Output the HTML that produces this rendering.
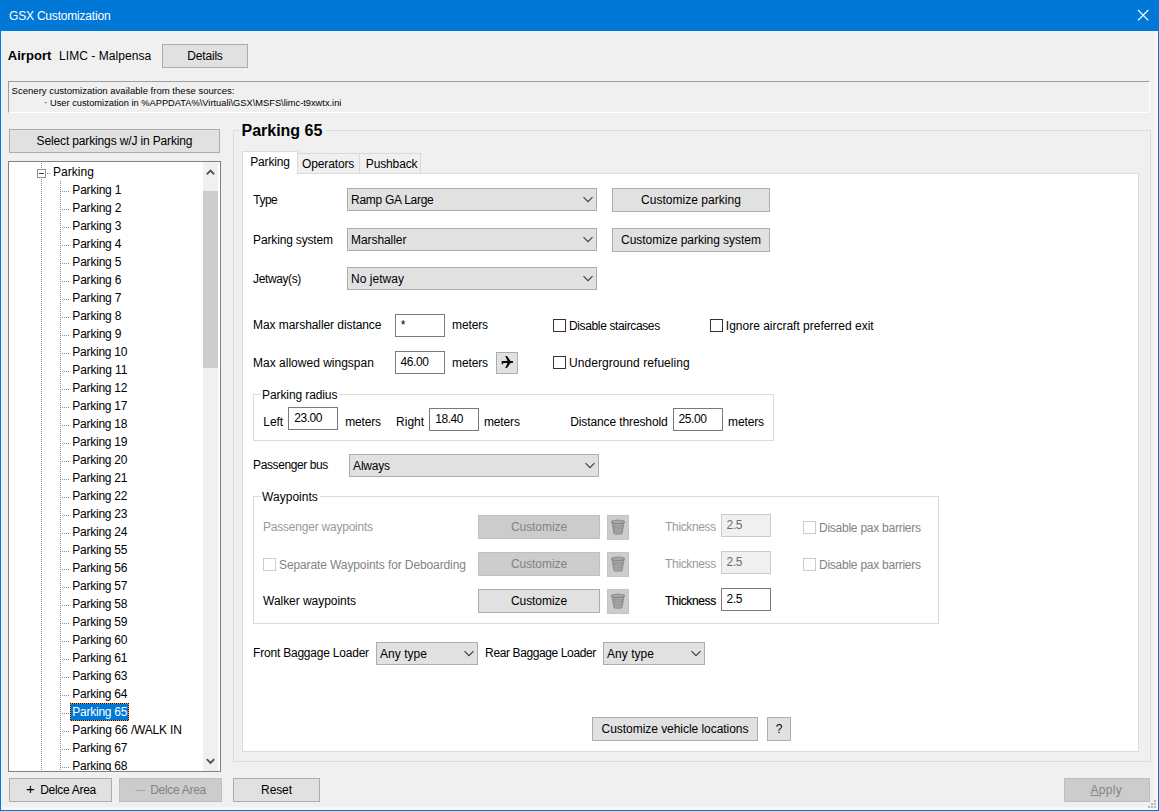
<!DOCTYPE html><html lang="en"><head><meta charset="utf-8"><title>GSX Customization</title><style>

html,body{margin:0;padding:0;}
body{width:1159px;height:811px;overflow:hidden;position:relative;background:#f0f0f0;font-family:"Liberation Sans", sans-serif;font-size:12px;}
.a{position:absolute;box-sizing:border-box;}
.t{position:absolute;white-space:pre;line-height:16px;height:16px;}
.dv{width:1px;background-image:linear-gradient(#8c8c8c 50%,transparent 50%);background-size:1px 2px;}
.dh{height:1px;background-image:linear-gradient(90deg,#8c8c8c 50%,transparent 50%);background-size:2px 1px;}
u{text-decoration:underline;}

</style></head><body>
<div class="a" style="left:0px;top:0px;width:1159px;height:811px;background:#0078d7;"></div>
<div class="a" style="left:1px;top:31px;width:1157px;height:779px;background:#f0f0f0;"></div>
<div class="a" style="left:1155px;top:31px;width:3px;height:779px;background:#f6f7f8;"></div>
<div class="a" style="left:1px;top:807px;width:1157px;height:3px;background:#f4f7fa;"></div>
<span class="t" style="left:9.0px;top:8px;color:#fff;letter-spacing:-0.195px;">GSX Customization</span>
<svg class="a" style="left:1136px;top:8px" width="14" height="14" viewBox="0 0 14 14"><path d="M2 2 L12.3 12.3 M12.3 2 L2 12.3" stroke="#fff" stroke-width="1.15" fill="none"/></svg>
<span class="t" style="left:7.7px;top:48px;color:#000;font-size:13px;font-weight:bold;letter-spacing:0.065px;">Airport</span>
<span class="t" style="left:59.0px;top:48px;color:#000;letter-spacing:0.062px;">LIMC - Malpensa</span>
<div class="a" style="left:162px;top:44px;width:86px;height:24px;background:#e1e1e1;border:1px solid #adadad;"></div>
<span class="t" style="left:162px;top:48px;color:#000;width:86px;text-align:center;letter-spacing:-0.184px;">Details</span>
<div class="a" style="left:8px;top:81px;width:1142px;height:32px;border-top:1px solid #a0a0a0;border-left:1px solid #a0a0a0;border-right:1px solid #fff;border-bottom:1px solid #fff;box-sizing:border-box;"></div>
<span class="t" style="left:11.6px;top:83px;color:#000;font-size:9.56px;">Scenery customization available from these sources:</span>
<span class="t" style="left:44.1px;top:95px;color:#000;font-size:10px;">·</span>
<span class="t" style="left:50.0px;top:95px;color:#000;font-size:9.29px;">User customization in %APPDATA%\Virtuali\GSX\MSFS\limc-t9xwtx.ini</span>
<div class="a" style="left:9px;top:129px;width:211px;height:24px;background:#e1e1e1;border:1px solid #adadad;"></div>
<span class="t" style="left:9px;top:133px;color:#000;width:211px;text-align:center;letter-spacing:-0.143px;">Select parkings w/J in Parking</span>
<div class="a" style="left:8px;top:161px;width:213px;height:611px;background:#fff;border:1px solid #828282;box-sizing:border-box;"></div>
<div class="a" style="left:9px;top:162px;width:194px;height:609px;overflow:hidden">
<div class="a dv" style="left:32px;top:1px;height:608px"></div>
<div class="a dv" style="left:51px;top:19px;height:590px"></div>
<div class="a" style="left:28px;top:7px;width:9px;height:9px;box-sizing:border-box;border:1px solid #919191;background:#fff"></div>
<div class="a" style="left:30px;top:11px;width:5px;height:1px;background:#404040"></div>
<div class="a dh" style="left:38px;top:11px;width:4px"></div>
<span class="t" style="left:44.1px;top:2px;color:#000;letter-spacing:0.016px;">Parking</span>
<div class="a dh" style="left:53px;top:29px;width:7px"></div>
<span class="t" style="left:63.35px;top:20px;color:#000;letter-spacing:-0.211px;">Parking 1</span>
<div class="a dh" style="left:53px;top:47px;width:7px"></div>
<span class="t" style="left:63.35px;top:38px;color:#000;letter-spacing:-0.211px;">Parking 2</span>
<div class="a dh" style="left:53px;top:65px;width:7px"></div>
<span class="t" style="left:63.35px;top:56px;color:#000;letter-spacing:-0.211px;">Parking 3</span>
<div class="a dh" style="left:53px;top:83px;width:7px"></div>
<span class="t" style="left:63.35px;top:74px;color:#000;letter-spacing:-0.211px;">Parking 4</span>
<div class="a dh" style="left:53px;top:101px;width:7px"></div>
<span class="t" style="left:63.35px;top:92px;color:#000;letter-spacing:-0.211px;">Parking 5</span>
<div class="a dh" style="left:53px;top:119px;width:7px"></div>
<span class="t" style="left:63.35px;top:110px;color:#000;letter-spacing:-0.211px;">Parking 6</span>
<div class="a dh" style="left:53px;top:137px;width:7px"></div>
<span class="t" style="left:63.35px;top:128px;color:#000;letter-spacing:-0.211px;">Parking 7</span>
<div class="a dh" style="left:53px;top:155px;width:7px"></div>
<span class="t" style="left:63.35px;top:146px;color:#000;letter-spacing:-0.211px;">Parking 8</span>
<div class="a dh" style="left:53px;top:173px;width:7px"></div>
<span class="t" style="left:63.35px;top:164px;color:#000;letter-spacing:-0.211px;">Parking 9</span>
<div class="a dh" style="left:53px;top:191px;width:7px"></div>
<span class="t" style="left:63.35px;top:182px;color:#000;letter-spacing:-0.258px;">Parking 10</span>
<div class="a dh" style="left:53px;top:209px;width:7px"></div>
<span class="t" style="left:63.35px;top:200px;color:#000;letter-spacing:-0.168px;">Parking 11</span>
<div class="a dh" style="left:53px;top:227px;width:7px"></div>
<span class="t" style="left:63.35px;top:218px;color:#000;letter-spacing:-0.258px;">Parking 12</span>
<div class="a dh" style="left:53px;top:245px;width:7px"></div>
<span class="t" style="left:63.35px;top:236px;color:#000;letter-spacing:-0.258px;">Parking 17</span>
<div class="a dh" style="left:53px;top:263px;width:7px"></div>
<span class="t" style="left:63.35px;top:254px;color:#000;letter-spacing:-0.258px;">Parking 18</span>
<div class="a dh" style="left:53px;top:281px;width:7px"></div>
<span class="t" style="left:63.35px;top:272px;color:#000;letter-spacing:-0.258px;">Parking 19</span>
<div class="a dh" style="left:53px;top:299px;width:7px"></div>
<span class="t" style="left:63.35px;top:290px;color:#000;letter-spacing:-0.258px;">Parking 20</span>
<div class="a dh" style="left:53px;top:317px;width:7px"></div>
<span class="t" style="left:63.35px;top:308px;color:#000;letter-spacing:-0.258px;">Parking 21</span>
<div class="a dh" style="left:53px;top:335px;width:7px"></div>
<span class="t" style="left:63.35px;top:326px;color:#000;letter-spacing:-0.258px;">Parking 22</span>
<div class="a dh" style="left:53px;top:353px;width:7px"></div>
<span class="t" style="left:63.35px;top:344px;color:#000;letter-spacing:-0.258px;">Parking 23</span>
<div class="a dh" style="left:53px;top:371px;width:7px"></div>
<span class="t" style="left:63.35px;top:362px;color:#000;letter-spacing:-0.258px;">Parking 24</span>
<div class="a dh" style="left:53px;top:389px;width:7px"></div>
<span class="t" style="left:63.35px;top:380px;color:#000;letter-spacing:-0.258px;">Parking 55</span>
<div class="a dh" style="left:53px;top:407px;width:7px"></div>
<span class="t" style="left:63.35px;top:398px;color:#000;letter-spacing:-0.258px;">Parking 56</span>
<div class="a dh" style="left:53px;top:425px;width:7px"></div>
<span class="t" style="left:63.35px;top:416px;color:#000;letter-spacing:-0.258px;">Parking 57</span>
<div class="a dh" style="left:53px;top:443px;width:7px"></div>
<span class="t" style="left:63.35px;top:434px;color:#000;letter-spacing:-0.258px;">Parking 58</span>
<div class="a dh" style="left:53px;top:461px;width:7px"></div>
<span class="t" style="left:63.35px;top:452px;color:#000;letter-spacing:-0.258px;">Parking 59</span>
<div class="a dh" style="left:53px;top:479px;width:7px"></div>
<span class="t" style="left:63.35px;top:470px;color:#000;letter-spacing:-0.258px;">Parking 60</span>
<div class="a dh" style="left:53px;top:497px;width:7px"></div>
<span class="t" style="left:63.35px;top:488px;color:#000;letter-spacing:-0.258px;">Parking 61</span>
<div class="a dh" style="left:53px;top:515px;width:7px"></div>
<span class="t" style="left:63.35px;top:506px;color:#000;letter-spacing:-0.258px;">Parking 63</span>
<div class="a dh" style="left:53px;top:533px;width:7px"></div>
<span class="t" style="left:63.35px;top:524px;color:#000;letter-spacing:-0.258px;">Parking 64</span>
<div class="a dh" style="left:53px;top:551px;width:7px"></div>
<div class="a" style="left:61px;top:541px;width:59px;height:18px;background:repeating-conic-gradient(#e39a4f 0% 25%,#1b1208 0% 50%) 0 0/2px 2px"></div><div class="a" style="left:62px;top:542px;width:57px;height:16px;background:#0078d7"></div>
<span class="t" style="left:63.35px;top:542px;color:#fff;letter-spacing:-0.258px;">Parking 65</span>
<div class="a dh" style="left:53px;top:569px;width:7px"></div>
<span class="t" style="left:63.35px;top:560px;color:#000;letter-spacing:-0.191px;">Parking 66 /WALK IN</span>
<div class="a dh" style="left:53px;top:587px;width:7px"></div>
<span class="t" style="left:63.35px;top:578px;color:#000;letter-spacing:-0.258px;">Parking 67</span>
<div class="a dh" style="left:53px;top:605px;width:7px"></div>
<span class="t" style="left:63.35px;top:596px;color:#000;letter-spacing:-0.258px;">Parking 68</span>
</div>
<div class="a" style="left:203px;top:162px;width:15px;height:609px;background:#f0f0f0;"></div>
<div class="a" style="left:203px;top:191px;width:15px;height:177px;background:#cdcdcd;"></div>
<svg class="a" style="left:205px;top:167px" width="11" height="10" viewBox="0 0 11 10"><path d="M1.8 7.3 L5.5 3.5 L9.2 7.3" fill="none" stroke="#505050" stroke-width="1.8"/></svg>
<svg class="a" style="left:205px;top:756px" width="11" height="10" viewBox="0 0 11 10"><path d="M1.8 3.2 L5.5 7 L9.2 3.2" fill="none" stroke="#505050" stroke-width="1.8"/></svg>
<div class="a" style="left:9px;top:778px;width:103px;height:24px;background:#e1e1e1;border:1px solid #adadad;"></div>
<span class="t" style="left:26.1px;top:781px;color:#000;font-size:15px;">+</span>
<span class="t" style="left:40.2px;top:782px;color:#000;letter-spacing:-0.290px;">Delce Area</span>
<div class="a" style="left:119px;top:778px;width:103px;height:24px;background:#cccccc;border:1px solid #bfbfbf;"></div>
<span class="t" style="left:135.9px;top:782px;color:#838383;font-size:9px;">—</span>
<span class="t" style="left:150.2px;top:782px;color:#838383;letter-spacing:-0.290px;">Delce Area</span>
<div class="a" style="left:233px;top:778px;width:87px;height:24px;background:#e1e1e1;border:1px solid #adadad;"></div>
<span class="t" style="left:233px;top:782px;color:#000;width:87px;text-align:center;letter-spacing:-0.112px;">Reset</span>
<div class="a" style="left:1064px;top:778px;width:86px;height:24px;background:#cccccc;border:1px solid #bfbfbf;"></div>
<span class="t" style="left:1090.6px;top:782px;color:#838383;letter-spacing:0.254px;"><u>A</u>pply</span>
<div class="a" style="left:1154px;top:800px;width:2px;height:2px;background:#b8b8b8"></div><div class="a" style="left:1154px;top:803px;width:2px;height:2px;background:#b8b8b8"></div><div class="a" style="left:1154px;top:806px;width:2px;height:2px;background:#b8b8b8"></div><div class="a" style="left:1151px;top:803px;width:2px;height:2px;background:#b8b8b8"></div><div class="a" style="left:1151px;top:806px;width:2px;height:2px;background:#b8b8b8"></div><div class="a" style="left:1148px;top:806px;width:2px;height:2px;background:#b8b8b8"></div>
<div class="a" style="left:233px;top:130px;width:918px;height:632px;border:1px solid #dcdcdc;box-sizing:border-box;"></div>
<div class="a" style="left:239px;top:128px;width:86px;height:5px;background:#f0f0f0;"></div>
<span class="t" style="left:241.5px;top:123px;color:#000;font-size:16px;font-weight:bold;letter-spacing:-0.014px;">Parking 65</span>
<div class="a" style="left:242px;top:173px;width:897px;height:579px;background:#fff;border:1px solid #dcdcdc;box-sizing:border-box;"></div>
<div class="a" style="left:297px;top:153px;width:63px;height:20px;background:#f0f0f0;border:1px solid #d9d9d9;border-bottom:none;"></div>
<div class="a" style="left:359px;top:153px;width:62px;height:20px;background:#f0f0f0;border:1px solid #d9d9d9;border-bottom:none;"></div>
<div class="a" style="left:242px;top:151px;width:56px;height:23px;background:#fff;border:1px solid #dcdcdc;border-bottom:none;"></div>
<span class="t" style="left:250.2px;top:154px;color:#000;letter-spacing:-0.155px;">Parking</span>
<span class="t" style="left:302.1px;top:156px;color:#000;letter-spacing:-0.145px;">Operators</span>
<span class="t" style="left:365.85px;top:156px;color:#000;letter-spacing:-0.144px;">Pushback</span>
<span class="t" style="left:253.35px;top:192px;color:#000;letter-spacing:-0.554px;">Type</span>
<div class="a" style="left:347px;top:188px;width:250px;height:23px;background:#e1e1e1;border:1px solid #adadad;"></div>
<svg class="a" style="left:582px;top:195px" width="12" height="9" viewBox="0 0 12 9"><path d="M1.5 2.2 L6 6.7 L10.5 2.2" fill="none" stroke="#3c3c3c" stroke-width="1.1"/></svg>
<span class="t" style="left:351.1px;top:192px;color:#000;letter-spacing:-0.281px;">Ramp GA Large</span>
<div class="a" style="left:612px;top:188px;width:158px;height:24px;background:#e1e1e1;border:1px solid #adadad;"></div>
<span class="t" style="left:612px;top:192px;color:#000;width:158px;text-align:center;letter-spacing:0.025px;">Customize parking</span>
<span class="t" style="left:253.1px;top:232px;color:#000;letter-spacing:-0.159px;">Parking system</span>
<div class="a" style="left:347px;top:228px;width:250px;height:23px;background:#e1e1e1;border:1px solid #adadad;"></div>
<svg class="a" style="left:582px;top:235px" width="12" height="9" viewBox="0 0 12 9"><path d="M1.5 2.2 L6 6.7 L10.5 2.2" fill="none" stroke="#3c3c3c" stroke-width="1.1"/></svg>
<span class="t" style="left:351.1px;top:232px;color:#000;letter-spacing:-0.082px;">Marshaller</span>
<div class="a" style="left:612px;top:228px;width:158px;height:24px;background:#e1e1e1;border:1px solid #adadad;"></div>
<span class="t" style="left:612px;top:232px;color:#000;width:158px;text-align:center;letter-spacing:-0.038px;">Customize parking system</span>
<span class="t" style="left:253.1px;top:271px;color:#000;letter-spacing:-0.394px;">Jetway(s)</span>
<div class="a" style="left:347px;top:267px;width:250px;height:23px;background:#e1e1e1;border:1px solid #adadad;"></div>
<svg class="a" style="left:582px;top:274px" width="12" height="9" viewBox="0 0 12 9"><path d="M1.5 2.2 L6 6.7 L10.5 2.2" fill="none" stroke="#3c3c3c" stroke-width="1.1"/></svg>
<span class="t" style="left:351.1px;top:271px;color:#000;letter-spacing:0.012px;">No jetway</span>
<span class="t" style="left:253.1px;top:317px;color:#000;letter-spacing:-0.077px;">Max marshaller distance</span>
<div class="a" style="left:395px;top:314px;width:50px;height:23px;background:#fff;border:1px solid #7a7a7a;"></div>
<span class="t" style="left:400.85px;top:317px;color:#000;">*</span>
<span class="t" style="left:452.1px;top:317px;color:#000;letter-spacing:-0.148px;">meters</span>
<div class="a" style="left:553px;top:319px;width:13px;height:13px;background:#fff;border:1px solid #333333;"></div>
<span class="t" style="left:569.0px;top:318px;color:#000;letter-spacing:-0.365px;">Disable staircases</span>
<div class="a" style="left:710px;top:319px;width:13px;height:13px;background:#fff;border:1px solid #333333;"></div>
<span class="t" style="left:725.85px;top:318px;color:#000;letter-spacing:-0.009px;">Ignore aircraft preferred exit</span>
<span class="t" style="left:253.1px;top:355px;color:#000;letter-spacing:0.003px;">Max allowed wingspan</span>
<div class="a" style="left:395px;top:351px;width:50px;height:23px;background:#fff;border:1px solid #7a7a7a;"></div>
<span class="t" style="left:400.6px;top:354px;color:#000;letter-spacing:-0.446px;">46.00</span>
<span class="t" style="left:452.1px;top:355px;color:#000;letter-spacing:-0.148px;">meters</span>
<div class="a" style="left:496px;top:352px;width:22px;height:22px;background:#e1e1e1;border:1px solid #adadad;box-sizing:border-box;"></div>
<svg class="a" style="left:499px;top:354px" width="16" height="16" viewBox="0 0 16 16"><path d="M2.7 7.1 L8.5 7.1 L6.3 2 L8 2 L11.5 7.1 L13.2 7.1 Q14.3 7.3 14.3 8 Q14.3 8.8 13.2 8.9 L11.5 8.9 L8 14 L6.3 14 L8.5 8.9 L4.1 8.9 L4.1 10.3 L2.7 10.3 Z" fill="#0a0a0a"/></svg>
<div class="a" style="left:553px;top:356px;width:13px;height:13px;background:#fff;border:1px solid #333333;"></div>
<span class="t" style="left:569.0px;top:355px;color:#000;letter-spacing:0.066px;">Underground refueling</span>
<div class="a" style="left:253px;top:394px;width:521px;height:47px;border:1px solid #dcdcdc;"></div>
<div class="a" style="left:260.5px;top:392px;width:78.4px;height:5px;background:#fff;"></div>
<span class="t" style="left:262.1px;top:387px;color:#000;letter-spacing:-0.108px;">Parking radius</span>
<span class="t" style="left:263.35px;top:414px;color:#000;letter-spacing:-0.116px;">Left</span>
<div class="a" style="left:288px;top:407px;width:50px;height:23px;background:#fff;border:1px solid #7a7a7a;"></div>
<span class="t" style="left:294.2px;top:410px;color:#000;letter-spacing:-0.446px;">23.00</span>
<span class="t" style="left:345.2px;top:414px;color:#000;letter-spacing:-0.148px;">meters</span>
<span class="t" style="left:396.1px;top:414px;color:#000;letter-spacing:0.007px;">Right</span>
<div class="a" style="left:429px;top:408px;width:50px;height:23px;background:#fff;border:1px solid #7a7a7a;"></div>
<span class="t" style="left:435.2px;top:411px;color:#000;letter-spacing:-0.446px;">18.40</span>
<span class="t" style="left:484.0px;top:414px;color:#000;letter-spacing:-0.148px;">meters</span>
<span class="t" style="left:570.2px;top:414px;color:#000;letter-spacing:-0.111px;">Distance threshold</span>
<div class="a" style="left:673px;top:408px;width:50px;height:23px;background:#fff;border:1px solid #7a7a7a;"></div>
<span class="t" style="left:678.6px;top:411px;color:#000;letter-spacing:-0.446px;">25.00</span>
<span class="t" style="left:728.1px;top:414px;color:#000;letter-spacing:-0.148px;">meters</span>
<span class="t" style="left:253.1px;top:457px;color:#000;letter-spacing:-0.405px;">Passenger bus</span>
<div class="a" style="left:349px;top:454px;width:250px;height:23px;background:#e1e1e1;border:1px solid #adadad;"></div>
<svg class="a" style="left:584px;top:461px" width="12" height="9" viewBox="0 0 12 9"><path d="M1.5 2.2 L6 6.7 L10.5 2.2" fill="none" stroke="#3c3c3c" stroke-width="1.1"/></svg>
<span class="t" style="left:353.1px;top:458px;color:#000;letter-spacing:-0.203px;">Always</span>
<div class="a" style="left:253px;top:496px;width:686px;height:128px;border:1px solid #dcdcdc;"></div>
<div class="a" style="left:260.5px;top:494px;width:59px;height:5px;background:#fff;"></div>
<span class="t" style="left:262.1px;top:489px;color:#000;letter-spacing:0.025px;">Waypoints</span>
<span class="t" style="left:263.1px;top:519px;color:#9a9a9a;letter-spacing:-0.225px;">Passenger waypoints</span>
<div class="a" style="left:263px;top:558px;width:13px;height:13px;background:#fff;border:1px solid #cccccc;"></div>
<span class="t" style="left:279.0px;top:557px;color:#838383;letter-spacing:-0.107px;">Separate Waypoints for Deboarding</span>
<span class="t" style="left:263.1px;top:593px;color:#000;letter-spacing:-0.050px;">Walker waypoints</span>
<div class="a" style="left:478px;top:515px;width:122px;height:24px;background:#cccccc;border:1px solid #bfbfbf;"></div>
<span class="t" style="left:478px;top:519px;color:#838383;width:122px;text-align:center;letter-spacing:-0.065px;">Customize</span>
<div class="a" style="left:607px;top:515px;width:22px;height:25px;background:#cccccc;border:1px solid #c4c4c4;"></div>
<svg class="a" style="left:610px;top:519px" width="16" height="17" viewBox="0 0 16 17"><path d="M1.3 2.8 L3.5 14.4 Q3.7 15.7 8 15.7 Q12.3 15.7 12.5 14.4 L14.7 2.8 Z" fill="#8e8e8e"/><path d="M2.3 5.5 L13.7 5.5 M2.8 8 L13.2 8 M3.2 10.5 L12.8 10.5 M3.6 13 L12.4 13 M4.6 4 L5.8 15.4 M8 4 L8 15.6 M11.4 4 L10.2 15.4 M6.3 4 L6.9 15.5 M9.7 4 L9.1 15.5" stroke="#b2b2b2" stroke-width="0.55" fill="none"/><ellipse cx="8" cy="2.8" rx="6.7" ry="1.7" fill="#a9a9a9" stroke="#808080" stroke-width="0.8"/></svg>
<span class="t" style="left:665.1px;top:519px;color:#9a9a9a;letter-spacing:-0.359px;">Thickness</span>
<div class="a" style="left:721px;top:514px;width:50px;height:23px;background:#f0f0f0;border:1px solid #cccccc;"></div>
<span class="t" style="left:726.6px;top:517px;color:#6d6d6d;letter-spacing:-0.379px;">2.5</span>
<div class="a" style="left:478px;top:552px;width:122px;height:24px;background:#cccccc;border:1px solid #bfbfbf;"></div>
<span class="t" style="left:478px;top:556px;color:#838383;width:122px;text-align:center;letter-spacing:-0.065px;">Customize</span>
<div class="a" style="left:607px;top:552px;width:22px;height:25px;background:#cccccc;border:1px solid #c4c4c4;"></div>
<svg class="a" style="left:610px;top:556px" width="16" height="17" viewBox="0 0 16 17"><path d="M1.3 2.8 L3.5 14.4 Q3.7 15.7 8 15.7 Q12.3 15.7 12.5 14.4 L14.7 2.8 Z" fill="#8e8e8e"/><path d="M2.3 5.5 L13.7 5.5 M2.8 8 L13.2 8 M3.2 10.5 L12.8 10.5 M3.6 13 L12.4 13 M4.6 4 L5.8 15.4 M8 4 L8 15.6 M11.4 4 L10.2 15.4 M6.3 4 L6.9 15.5 M9.7 4 L9.1 15.5" stroke="#b2b2b2" stroke-width="0.55" fill="none"/><ellipse cx="8" cy="2.8" rx="6.7" ry="1.7" fill="#a9a9a9" stroke="#808080" stroke-width="0.8"/></svg>
<span class="t" style="left:665.1px;top:556px;color:#9a9a9a;letter-spacing:-0.359px;">Thickness</span>
<div class="a" style="left:721px;top:551px;width:50px;height:23px;background:#f0f0f0;border:1px solid #cccccc;"></div>
<span class="t" style="left:726.6px;top:554px;color:#6d6d6d;letter-spacing:-0.379px;">2.5</span>
<div class="a" style="left:478px;top:589px;width:122px;height:24px;background:#e1e1e1;border:1px solid #adadad;"></div>
<span class="t" style="left:478px;top:593px;color:#000;width:122px;text-align:center;letter-spacing:-0.065px;">Customize</span>
<div class="a" style="left:607px;top:589px;width:22px;height:25px;background:#cccccc;border:1px solid #c4c4c4;"></div>
<svg class="a" style="left:610px;top:593px" width="16" height="17" viewBox="0 0 16 17"><path d="M1.3 2.8 L3.5 14.4 Q3.7 15.7 8 15.7 Q12.3 15.7 12.5 14.4 L14.7 2.8 Z" fill="#8e8e8e"/><path d="M2.3 5.5 L13.7 5.5 M2.8 8 L13.2 8 M3.2 10.5 L12.8 10.5 M3.6 13 L12.4 13 M4.6 4 L5.8 15.4 M8 4 L8 15.6 M11.4 4 L10.2 15.4 M6.3 4 L6.9 15.5 M9.7 4 L9.1 15.5" stroke="#b2b2b2" stroke-width="0.55" fill="none"/><ellipse cx="8" cy="2.8" rx="6.7" ry="1.7" fill="#a9a9a9" stroke="#808080" stroke-width="0.8"/></svg>
<span class="t" style="left:665.1px;top:593px;color:#000;letter-spacing:-0.359px;-webkit-text-stroke:0.18px #000;">Thickness</span>
<div class="a" style="left:721px;top:588px;width:50px;height:23px;background:#fff;border:1px solid #7a7a7a;"></div>
<span class="t" style="left:726.6px;top:591px;color:#000;letter-spacing:-0.379px;">2.5</span>
<div class="a" style="left:803px;top:521px;width:13px;height:13px;background:#fff;border:1px solid #cccccc;"></div>
<span class="t" style="left:819.0px;top:520px;color:#838383;letter-spacing:-0.246px;">Disable pax barriers</span>
<div class="a" style="left:803px;top:558px;width:13px;height:13px;background:#fff;border:1px solid #cccccc;"></div>
<span class="t" style="left:819.0px;top:557px;color:#838383;letter-spacing:-0.246px;">Disable pax barriers</span>
<span class="t" style="left:253.1px;top:645px;color:#000;letter-spacing:-0.215px;">Front Baggage Loader</span>
<div class="a" style="left:376px;top:642px;width:102px;height:23px;background:#e1e1e1;border:1px solid #adadad;"></div>
<svg class="a" style="left:463px;top:649px" width="12" height="9" viewBox="0 0 12 9"><path d="M1.5 2.2 L6 6.7 L10.5 2.2" fill="none" stroke="#3c3c3c" stroke-width="1.1"/></svg>
<span class="t" style="left:380.1px;top:646px;color:#000;letter-spacing:0.012px;">Any type</span>
<span class="t" style="left:485.1px;top:645px;color:#000;letter-spacing:-0.384px;">Rear Baggage Loader</span>
<div class="a" style="left:603px;top:642px;width:102px;height:23px;background:#e1e1e1;border:1px solid #adadad;"></div>
<svg class="a" style="left:690px;top:649px" width="12" height="9" viewBox="0 0 12 9"><path d="M1.5 2.2 L6 6.7 L10.5 2.2" fill="none" stroke="#3c3c3c" stroke-width="1.1"/></svg>
<span class="t" style="left:607.1px;top:646px;color:#000;letter-spacing:0.012px;">Any type</span>
<div class="a" style="left:592px;top:717px;width:166px;height:24px;background:#e1e1e1;border:1px solid #adadad;"></div>
<span class="t" style="left:592px;top:721px;color:#000;width:166px;text-align:center;letter-spacing:-0.047px;">Customize vehicle locations</span>
<div class="a" style="left:767px;top:717px;width:24px;height:24px;background:#e1e1e1;border:1px solid #adadad;"></div>
<span class="t" style="left:767px;top:721px;color:#000;width:24px;text-align:center;">?</span>
</body></html>
